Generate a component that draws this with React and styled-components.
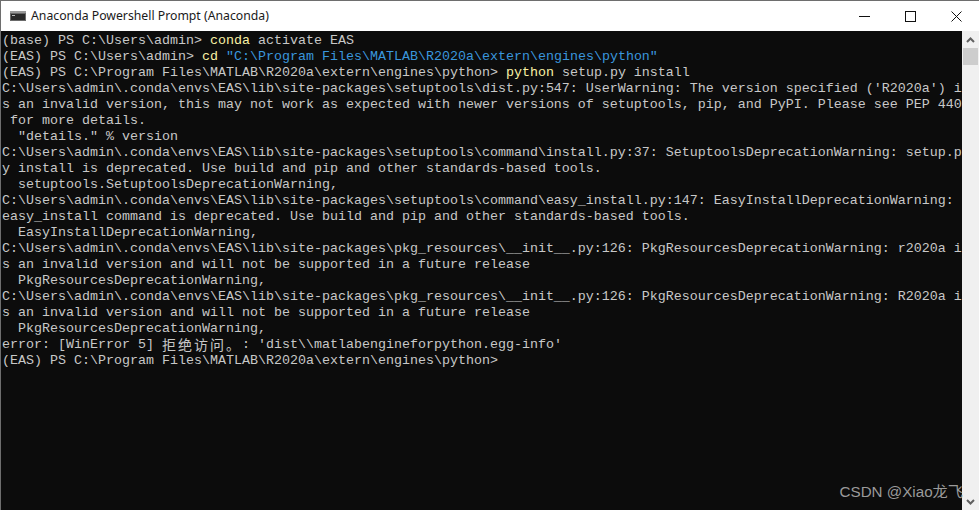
import styled, { createGlobalStyle } from "styled-components";

const GlobalStyle = createGlobalStyle`
  html, body {
    margin: 0;
    padding: 0;
    background: #0c0c0c;
  }
`;

const Win = styled.div`
  position: relative;
  width: 979px;
  height: 510px;
  display: flex;
  flex-direction: column;
  overflow: hidden;
  box-sizing: border-box;
  border-top: 1px solid #6e6e6e;
  border-left: 1px solid #6e6e6e;
  background: #0c0c0c;
`;

const TitleBar = styled.div`
  height: 30px;
  flex: none;
  background: #fff;
  display: flex;
  align-items: center;
  padding-left: 9px;
  font-family: "Noto Sans", "Liberation Sans", sans-serif;
  font-size: 12.25px;
  color: #1a1a1a;
`;

const Title = styled.span`
  margin: 0 0 2px 5px;
  flex: 1;
  white-space: nowrap;
`;

const WinBtn = styled.div`
  width: 46px;
  height: 30px;
  display: flex;
  align-items: center;
  justify-content: center;
`;

const Body = styled.div`
  flex: 1;
  display: flex;
  min-height: 0;
`;

const Console = styled.pre`
  flex: 1;
  margin: 0;
  padding: 2px 0 0 1px;
  overflow: hidden;
  background: #0c0c0c;
  color: #c8c8c8;
  font-family: "Liberation Mono", monospace;
  font-size: 13.33px;
  line-height: 16px;
`;

const Line = styled.div`
  height: 16px;
  white-space: pre;
`;

const Cmd = styled.span`
  color: #f9f1a5;
`;

const Str = styled.span`
  color: #3a96dd;
`;

const Cjk = styled.span`
  display: inline-block;
  width: 80px;
  height: 16px;
  vertical-align: top;
  font-family: "Noto Sans CJK SC", sans-serif;
  font-size: 14px;
  line-height: 15px;
  letter-spacing: 2px;
`;

const Scrollbar = styled.div`
  width: 17px;
  flex: none;
  background: #f0f0f0;
  display: flex;
  flex-direction: column;
  align-items: center;
`;

const Arrow = styled.div`
  height: 17px;
  flex: none;
  width: 100%;
  display: flex;
  align-items: center;
  justify-content: center;
`;

const Thumb = styled.div`
  width: 15px;
  height: 17px;
  background: #cdcdcd;
`;

const Spacer = styled.div`
  flex: 1;
`;

const Watermark = styled.div`
  position: absolute;
  right: 16px;
  bottom: 9px;
  font-family: "Liberation Sans", "Noto Sans CJK SC", sans-serif;
  font-size: 15.2px;
  line-height: 18px;
  color: #9a9a9a;
  white-space: nowrap;
`;

const ConsoleIcon = () => (
  <svg width="16" height="10" viewBox="0 0 16 10">
    <rect width="16" height="10" fill="#6a6a6a" />
    <rect width="16" height="2" fill="#9a9a9a" />
    <rect x="1" y="3" width="14" height="6" fill="#2a2a2a" />
    <rect x="2" y="4" width="3" height="1" fill="#bbb" />
  </svg>
);

const lines = [
  <>(base) PS C:\Users\admin&gt; <Cmd>conda</Cmd> activate EAS</>,
  <>(EAS) PS C:\Users\admin&gt; <Cmd>cd</Cmd> <Str>"C:\Program Files\MATLAB\R2020a\extern\engines\python"</Str></>,
  <>(EAS) PS C:\Program Files\MATLAB\R2020a\extern\engines\python&gt; <Cmd>python</Cmd> setup.py install</>,
  "C:\\Users\\admin\\.conda\\envs\\EAS\\lib\\site-packages\\setuptools\\dist.py:547: UserWarning: The version specified ('R2020a') i",
  "s an invalid version, this may not work as expected with newer versions of setuptools, pip, and PyPI. Please see PEP 440",
  " for more details.",
  '  "details." % version',
  "C:\\Users\\admin\\.conda\\envs\\EAS\\lib\\site-packages\\setuptools\\command\\install.py:37: SetuptoolsDeprecationWarning: setup.p",
  "y install is deprecated. Use build and pip and other standards-based tools.",
  "  setuptools.SetuptoolsDeprecationWarning,",
  "C:\\Users\\admin\\.conda\\envs\\EAS\\lib\\site-packages\\setuptools\\command\\easy_install.py:147: EasyInstallDeprecationWarning:",
  "easy_install command is deprecated. Use build and pip and other standards-based tools.",
  "  EasyInstallDeprecationWarning,",
  "C:\\Users\\admin\\.conda\\envs\\EAS\\lib\\site-packages\\pkg_resources\\__init__.py:126: PkgResourcesDeprecationWarning: r2020a i",
  "s an invalid version and will not be supported in a future release",
  "  PkgResourcesDeprecationWarning,",
  "C:\\Users\\admin\\.conda\\envs\\EAS\\lib\\site-packages\\pkg_resources\\__init__.py:126: PkgResourcesDeprecationWarning: R2020a i",
  "s an invalid version and will not be supported in a future release",
  "  PkgResourcesDeprecationWarning,",
  <>error: [WinError 5] <Cjk>拒绝访问。</Cjk>: 'dist\\matlabengineforpython.egg-info'</>,
  <>(EAS) PS C:\Program Files\MATLAB\R2020a\extern\engines\python&gt;</>,
];

const App = () => {
  return (
    <>
      <GlobalStyle />
      <Win>
        <TitleBar>
          <ConsoleIcon />
          <Title>Anaconda Powershell Prompt (Anaconda)</Title>
          <WinBtn>
            <svg width="11" height="11" viewBox="0 0 11 11">
              <path d="M0 5.5H11" stroke="#111" />
            </svg>
          </WinBtn>
          <WinBtn>
            <svg width="11" height="11" viewBox="0 0 11 11">
              <rect x="0.5" y="0.5" width="10" height="10" fill="none" stroke="#111" />
            </svg>
          </WinBtn>
          <WinBtn>
            <svg width="11" height="11" viewBox="0 0 11 11">
              <path d="M0.5 0.5L10.5 10.5M10.5 0.5L0.5 10.5" stroke="#111" />
            </svg>
          </WinBtn>
        </TitleBar>
        <Body>
          <Console>
            {lines.map((line, i) => (
              <Line key={i}>{line}</Line>
            ))}
          </Console>
          <Scrollbar>
            <Arrow>
              <svg width="9" height="6" viewBox="0 0 9 6">
                <path d="M1 5L4.5 1.5L8 5" fill="none" stroke="#606060" strokeWidth="2" />
              </svg>
            </Arrow>
            <Thumb />
            <Spacer />
            <Arrow>
              <svg width="9" height="6" viewBox="0 0 9 6">
                <path d="M1 1L4.5 4.5L8 1" fill="none" stroke="#606060" strokeWidth="2" />
              </svg>
            </Arrow>
          </Scrollbar>
        </Body>
        <Watermark>CSDN @Xiao龙飞</Watermark>
      </Win>
    </>
  );
};

export default App;
